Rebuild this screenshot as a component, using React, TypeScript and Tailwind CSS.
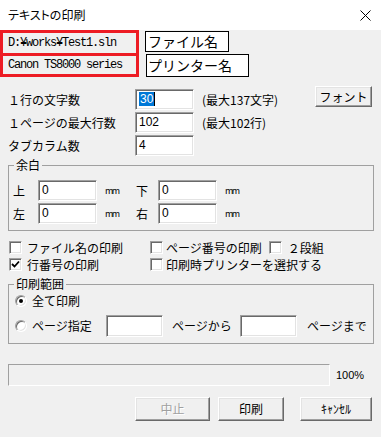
import React from 'react';

const sunken =
  'bg-white border border-t-[#a0a0a0] border-l-[#a0a0a0] border-b-white border-r-white shadow-[inset_1px_1px_0_#696969,inset_-1px_-1px_0_#e3e3e3]';
const raised =
  'bg-[#f0f0f0] border border-t-white border-l-white border-b-[#696969] border-r-[#696969] shadow-[inset_-1px_-1px_0_#a0a0a0,inset_1px_1px_0_#e3e3e3] flex items-center justify-center';
const mono = "font-['Liberation_Mono',monospace] text-[12px] tracking-[-1.2px]";
const num = "font-['Liberation_Sans',sans-serif] text-[12px] leading-[14px]";

function Field({ className, children }: { className: string; children?: React.ReactNode }) {
  return (
    <div className={`${sunken} ${className} pl-[3px] pt-[2px] ${num} flex items-start`}>
      {children}
    </div>
  );
}

function Check({ checked }: { checked?: boolean }) {
  return (
    <div className={`${sunken} w-[13px] h-[13px] shrink-0 flex items-center justify-center`}>
      {checked && (
        <svg width="9" height="9" viewBox="0 0 9 9">
          <path d="M1 4 L3.5 6.5 L8 1.5" fill="none" stroke="#000" strokeWidth="1.8" />
        </svg>
      )}
    </div>
  );
}

function Radio({ on }: { on?: boolean }) {
  return (
    <div className="w-[12px] h-[12px] shrink-0 rounded-full bg-white border border-t-[#a0a0a0] border-l-[#a0a0a0] border-b-white border-r-white shadow-[inset_1px_1px_0_#696969,inset_-1px_-1px_0_#e3e3e3] flex items-center justify-center">
      {on && <div className="w-[4px] h-[4px] rounded-full bg-black" />}
    </div>
  );
}

export default function App() {
  return (
    <div className="w-[381px] h-[437px] bg-[#f0f0f0] overflow-hidden text-black text-[12px] leading-[14px] font-['Noto_Sans_CJK_JP',sans-serif]">
      {/* title bar */}
      <div className="h-[30px] bg-white flex items-center justify-between pl-[8px] pr-[10px]">
        <span className="[font-feature-settings:'palt'] text-[12px]">テキストの印刷</span>
        <svg width="11" height="11" viewBox="0 0 11 11">
          <path d="M0.5 0.5 L10.5 10.5 M10.5 0.5 L0.5 10.5" stroke="#000" strokeWidth="1" />
        </svg>
      </div>

      {/* file / printer */}
      <div className="flex items-start">
        <div className="flex flex-col w-[139px]">
          <div className={`h-[26px] border-[3px] border-[#ed1c24] flex items-center pl-[5px] ${mono}`}>
            D:¥works¥Test1.sln
          </div>
          <div className={`h-[21px] border-[3px] border-t-0 border-[#ed1c24] flex items-center pl-[5px] ${mono}`}>
            Canon TS8000 series
          </div>
        </div>
        <div className="flex flex-col ml-[6px] pt-[1px]">
          <div className="w-[84px] h-[21px] border border-black bg-white text-[14px] leading-[19px] pl-[2px]">
            ファイル名
          </div>
          <div className="w-[103px] h-[23px] mt-[2px] ml-[1px] border border-black bg-white text-[14px] leading-[21px] pl-[1px]">
            プリンター名
          </div>
        </div>
      </div>

      {/* counts */}
      <div className="flex items-start mt-[12px] pl-[8px]">
        <div className="flex flex-col gap-[2px]">
          <div className="flex items-center h-[21px]">
            <span className="w-[127px]">１行の文字数</span>
            <Field className="w-[59px] h-[21px]">
              <span className="bg-[#0078d7] text-white px-[1px]">30</span>
              <span className="w-[1px] h-[14px] bg-black" />
            </Field>
            <span className="ml-[8px]">(最大137文字)</span>
          </div>
          <div className="flex items-center h-[21px]">
            <span className="w-[127px]">１ページの最大行数</span>
            <Field className="w-[59px] h-[21px]">102</Field>
            <span className="ml-[8px]">(最大102行)</span>
          </div>
          <div className="flex items-center h-[21px]">
            <span className="w-[127px]">タブカラム数</span>
            <Field className="w-[59px] h-[21px]">4</Field>
          </div>
        </div>
        <div className={`${raised} ml-auto mr-[9px] -mt-[3px] w-[57px] h-[21px]`}>フォント</div>
      </div>

      {/* margins */}
      <fieldset className="ml-[8px] mt-[2px] w-[366px] border border-[#a0a0a0] px-0 pt-[8px] pb-[6px] min-w-0">
        <legend className="ml-[5px] px-[2px] leading-[14px]">余白</legend>
        <div className="flex flex-col gap-[2px] pl-[4px]">
          <div className="flex items-center h-[21px]">
            <span className="w-[25px]">上</span>
            <Field className="w-[59px] h-[21px]">0</Field>
            <span className="ml-[8px] w-[31px] text-[9px] tracking-[-1.5px]">mm</span>
            <span className="w-[22px]">下</span>
            <Field className="w-[59px] h-[21px]">0</Field>
            <span className="ml-[8px] text-[9px] tracking-[-1.5px]">mm</span>
          </div>
          <div className="flex items-center h-[21px]">
            <span className="w-[25px]">左</span>
            <Field className="w-[59px] h-[21px]">0</Field>
            <span className="ml-[8px] w-[31px] text-[9px] tracking-[-1.5px]">mm</span>
            <span className="w-[22px]">右</span>
            <Field className="w-[59px] h-[21px]">0</Field>
            <span className="ml-[8px] text-[9px] tracking-[-1.5px]">mm</span>
          </div>
        </div>
      </fieldset>

      {/* options */}
      <div className="mt-[8px] pl-[9px] flex flex-col">
        <div className="flex items-center h-[17px]">
          <div className="w-[141px] flex items-center">
            <Check />
            <span className="ml-[5px]">ファイル名の印刷</span>
          </div>
          <Check />
          <span className="ml-[3px]">ページ番号の印刷</span>
          <div className="ml-[7px]">
            <Check />
          </div>
          <span className="ml-[6px]">２段組</span>
        </div>
        <div className="flex items-center h-[17px]">
          <div className="w-[141px] flex items-center">
            <Check checked />
            <span className="ml-[5px]">行番号の印刷</span>
          </div>
          <Check />
          <span className="ml-[3px]">印刷時プリンターを選択する</span>
        </div>
      </div>

      {/* range */}
      <fieldset className="ml-[8px] mt-[4px] w-[366px] border border-[#a0a0a0] px-0 pt-[2px] pb-[6px] min-w-0">
        <legend className="ml-[5px] px-[2px] leading-[14px]">印刷範囲</legend>
        <div className="pl-[6px] flex flex-col">
          <div className="flex items-center h-[16px]">
            <Radio on />
            <span className="ml-[5px]">全て印刷</span>
          </div>
          <div className="flex items-center h-[22px] mt-[6px]">
            <Radio />
            <span className="ml-[5px] w-[74px]">ページ指定</span>
            <Field className="w-[57px] h-[22px]" />
            <span className="ml-[9px] w-[68px]">ページから</span>
            <Field className="w-[57px] h-[22px]" />
            <span className="ml-[10px]">ページまで</span>
          </div>
        </div>
      </fieldset>

      {/* progress */}
      <div className="mt-[20px] ml-[8px] flex items-center">
        <div className="w-[322px] h-[22px] border border-t-[#a0a0a0] border-l-[#a0a0a0] border-b-white border-r-white" />
        <span className="ml-[6px] font-['Liberation_Sans',sans-serif] text-[11px]">100%</span>
      </div>

      {/* buttons */}
      <div className="mt-[11px] ml-[135px] flex">
        <div className={`${raised} w-[75px] h-[24px] text-[#a0a0a0] [text-shadow:1px_1px_0_#fff]`}>中止</div>
        <div className={`${raised} ml-[8px] w-[66px] h-[24px]`}>印刷</div>
        <div className={`${raised} ml-[16px] w-[72px] h-[24px]`}>ｷｬﾝｾﾙ</div>
      </div>
    </div>
  );
}
